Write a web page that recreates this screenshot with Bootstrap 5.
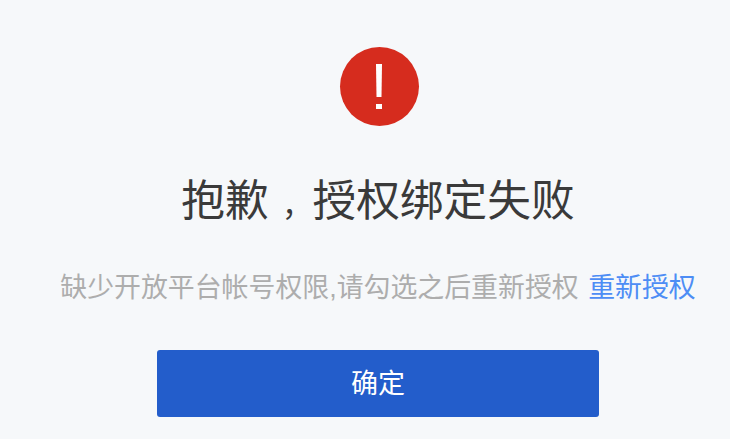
<!DOCTYPE html>
<html lang="zh-CN"><head><meta charset="utf-8">
<link href="https://cdn.jsdelivr.net/npm/bootstrap@5.3.0/dist/css/bootstrap.min.css" rel="stylesheet">
<style>
html,body{height:100%;overflow:hidden}
body{background:#f6f8fa;font-family:"Liberation Sans","Noto Sans CJK SC",sans-serif;padding:47px 0 0 26px}
.err-dot{width:79px;height:79px;border-radius:50%;background:#d62c1e;margin-left:2px}
.err-title{font-size:43.7px;line-height:56px;height:56px;color:#3a3a3a;margin:47px 0 0;font-weight:400}
.err-comma{font-size:.7em;padding-left:.43em;line-height:0}
.err-desc{font-size:26.9px;line-height:34px;color:#adadad;margin-top:42px;white-space:nowrap}
.err-desc a{color:#4d8df5;text-decoration:none;margin-left:2px}
.err-btn{width:442px;height:67px;background:#235dcb;border:0;border-radius:3px;font-size:27px;line-height:1.6;color:#fff;margin-top:45px;padding-top:8px}
</style></head><body>
<div class="d-flex flex-column align-items-center text-center">
<div class="err-dot d-flex align-items-center justify-content-center">
<svg width="8" height="46" viewBox="0 0 8 46"><path d="M1 0h6l-.5 33h-5z" fill="#fff"/><rect x="1" y="40" width="6" height="5" fill="#fff"/></svg>
</div>
<h1 class="err-title">抱歉<span class="err-comma">，</span>授权绑定失败</h1>
<div class="err-desc">缺少开放平台帐号权限,请勾选之后重新授权 <a href="#">重新授权</a></div>
<button class="btn err-btn" type="button">确定</button>
</div>
<script src="https://cdn.jsdelivr.net/npm/bootstrap@5.3.0/dist/js/bootstrap.bundle.min.js"></script>
</body></html>
